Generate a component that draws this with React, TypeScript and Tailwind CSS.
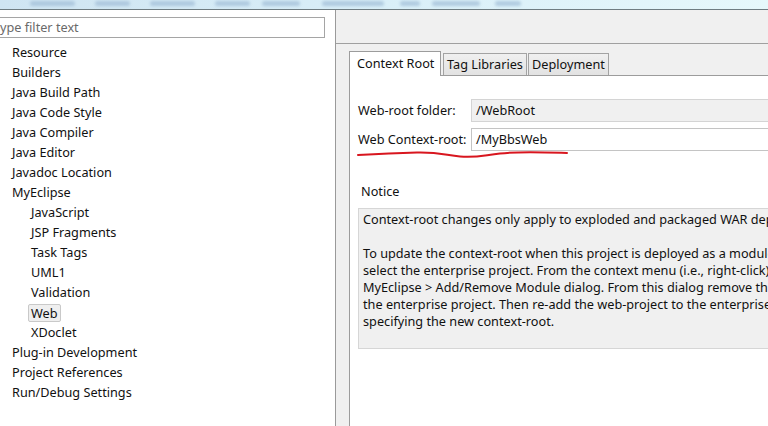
import React from "react";

const treeItems: { label: string; indent?: boolean; selected?: boolean }[] = [
  { label: "Resource" },
  { label: "Builders" },
  { label: "Java Build Path" },
  { label: "Java Code Style" },
  { label: "Java Compiler" },
  { label: "Java Editor" },
  { label: "Javadoc Location" },
  { label: "MyEclipse" },
  { label: "JavaScript", indent: true },
  { label: "JSP Fragments", indent: true },
  { label: "Task Tags", indent: true },
  { label: "UML1", indent: true },
  { label: "Validation", indent: true },
  { label: "Web", indent: true, selected: true },
  { label: "XDoclet", indent: true },
  { label: "Plug-in Development" },
  { label: "Project References" },
  { label: "Run/Debug Settings" },
];

// ぼやけたメニューバーの文字の跡 (x, 幅)
const menuBlobs: [number, number][] = [
  [30, 45], [95, 35], [150, 45], [215, 35], [262, 38], [322, 62], [400, 20], [432, 48], [495, 26],
];

export default function App() {
  return (
    <div className="relative flex h-[426px] w-[768px] flex-col overflow-hidden bg-white font-['Noto_Sans','Liberation_Sans',sans-serif] text-[12.7px] text-[#111]">
      {/* 上端のぼやけたメニューバー */}
      <div className="relative h-[10px] shrink-0 overflow-hidden border-b border-[#6f7d82] bg-gradient-to-r from-[#cfe5f2] via-[#d9eff8] to-[#e6f8fb]">
        {menuBlobs.map(([x, w]) => (
          <div
            key={x}
            className="absolute top-[1px] h-[5px] rounded-full bg-[#9fbcd6] opacity-70 blur-[1.5px]"
            style={{ left: x, width: w }}
          />
        ))}
      </div>

      <div className="flex flex-1">
        {/* 左ツリー */}
        <div className="w-[336px] shrink-0 border-r border-[#9a9a9a] bg-white">
          <div className="mt-[7px] mr-[10px] flex h-[21px] items-center border-y border-r border-[#a5a5a5] text-[#6a6a6a]">
            <span className="leading-none">ype filter text</span>
          </div>
          <div className="mt-[5px] flex flex-col">
            {treeItems.map((item) => (
              <div
                key={item.label}
                className={`flex h-[20px] items-center ${item.indent ? "pl-[28px]" : "pl-[12px]"}`}
              >
                {item.selected ? (
                  <span className="rounded-[2px] border border-[#c9c9c9] bg-[#efefef] px-[2px] leading-[16px]">
                    {item.label}
                  </span>
                ) : (
                  <span className={item.indent ? "pl-[3px]" : ""}>{item.label}</span>
                )}
              </div>
            ))}
          </div>
        </div>

        {/* 右側プロパティ */}
        <div className="flex w-[560px] shrink-0 flex-col bg-[#f0f0f0]">
          <div className="h-[34px] shrink-0 border-b border-[#a0a0a0]" />
          <div className="flex flex-1">
            <div className="w-[13px] shrink-0" />
            <div className="flex flex-1 flex-col">
              {/* タブ */}
              <div className="flex h-[31px] items-end gap-[1px]">
                <div className="relative z-10 -mb-px flex h-[25px] w-[92px] items-start border border-b-0 border-[#9c9c9c] bg-white pl-[7px] pt-[2px]">
                  Context Root
                </div>
                <div className="ml-[1px] flex h-[22px] w-[84px] items-center justify-center border border-b-0 border-[#a3a3a3] bg-gradient-to-b from-[#f0f0f0] to-[#e2e2e2]">
                  Tag Libraries
                </div>
                <div className="flex h-[22px] w-[81px] items-center justify-center border border-b-0 border-[#a3a3a3] bg-gradient-to-b from-[#f0f0f0] to-[#e2e2e2]">
                  Deployment
                </div>
              </div>

              {/* 内容 */}
              <div className="flex-1 border-l border-t border-[#9c9c9c] bg-white pl-[8px] pt-[23px]">
                <div className="flex h-[23px] items-center">
                  <span className="w-[113px] shrink-0">Web-root folder:</span>
                  <div className="flex h-[23px] flex-1 items-center border border-[#d4d4d4] bg-[#f0f0f0] pl-[4px]">
                    /WebRoot
                  </div>
                </div>
                <div className="mt-[6px] flex h-[23px] items-center">
                  <span className="w-[113px] shrink-0">Web Context-root:</span>
                  <div className="flex h-[23px] flex-1 items-center border border-[#c4c4c4] bg-white pl-[4px]">
                    /MyBbsWeb
                  </div>
                </div>

                <div className="mt-[31px] pl-[3px]">Notice</div>
                <div className="mt-[7px] h-[141px] border border-[#d6d6d6] bg-[#f0f0f0] pl-[4px] pt-[2px] leading-[17px]">
                  <p className="whitespace-nowrap">Context-root changes only apply to exploded and packaged WAR deployments.</p>
                  <p className="h-[17px]" />
                  <p className="whitespace-nowrap">To update the context-root when this project is deployed as a module of an enterprise project,</p>
                  <p className="whitespace-nowrap">select the enterprise project. From the context menu (i.e., right-click) open the</p>
                  <p className="whitespace-nowrap">MyEclipse &gt; Add/Remove Module dialog. From this dialog remove the web-project from</p>
                  <p className="whitespace-nowrap">the enterprise project. Then re-add the web-project to the enterprise project</p>
                  <p className="whitespace-nowrap">specifying the new context-root.</p>
                </div>
              </div>
            </div>
          </div>
        </div>
      </div>

      {/* 赤い手書きの下線 */}
      <svg className="pointer-events-none absolute left-[350px] top-[145px]" width="230" height="16" viewBox="0 0 230 16">
        <path
          d="M8 10 C 25 9, 45 8, 67 7.5 S 95 10, 110 11.5 S 130 11, 150 8.5 S 190 7, 217 8"
          fill="none"
          stroke="#d8161f"
          strokeWidth="2"
          strokeLinecap="round"
        />
      </svg>
    </div>
  );
}
